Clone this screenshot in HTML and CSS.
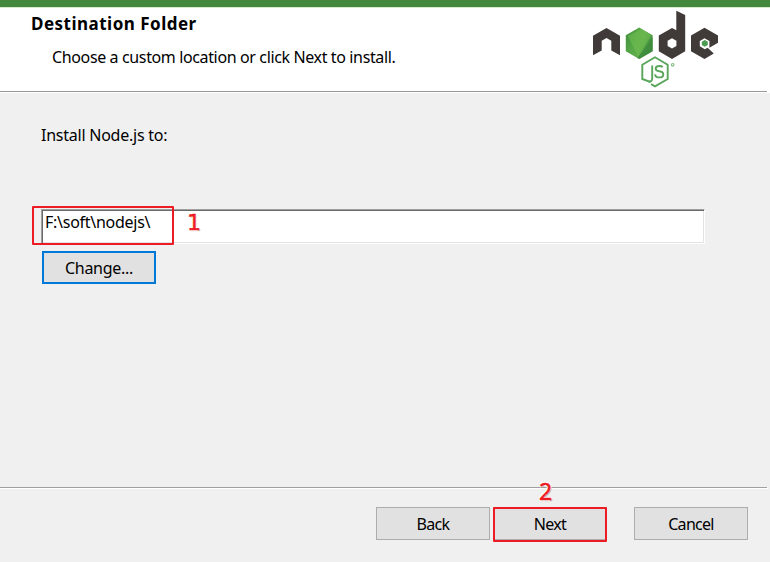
FILE: index.html
```html
<!DOCTYPE html>
<html lang="en">
<head>
<meta charset="utf-8">
<title>Node.js Setup</title>
<link rel="stylesheet" href="styles.css">
</head>
<body>
<div class="window">
  <header class="banner">
    <div class="heading">
      <h1 class="title">Destination Folder</h1>
      <p class="subtitle">Choose a custom location or click Next to install.</p>
    </div>
    <svg class="logo" width="130" height="80" viewBox="590 9 130 80" aria-label="node js">
      <defs>
        <linearGradient id="leaf" x1="0" y1="0" x2="1" y2=".5">
          <stop offset="0" stop-color="#3f8b3d"/>
          <stop offset=".4" stop-color="#55a647"/>
          <stop offset=".65" stop-color="#5fae4b"/>
          <stop offset="1" stop-color="#438f40"/>
        </linearGradient>
      </defs>
      <path fill="#403a39" d="M593 35.8 606.5 28 620 35.8V55.2L611.3 50.5V40.8L606.5 38 601.7 40.8V50.5L593 55.2Z"/>
      <path fill="url(#leaf)" d="M639.2 27.5 652.6 35.3V51.2L639.2 59 625.8 51.2V35.3Z"/>
      <path fill="#6fbd50" opacity=".6" d="M628 36 641 29 651 35 638.5 57.5Z"/>
      <path fill="#3f8b3d" opacity=".8" d="M652.6 37V51.2L639.2 59 637.5 58Z"/>
      <path fill="#403a39" fill-rule="evenodd" d="M676.3 10.8 685.2 15V51.2L672 59 658.8 51.2V35.5L672 28 676.3 30.3ZM672 38.2 667.6 40.8V45.9L672 48.5 676.4 45.9V40.8Z"/>
      <path fill="#403a39" d="M704.5 27.7 718 35.5V42.7L709.4 47.7V40.9L704.5 38.2 699.8 40.9V46.2L704.8 49.2 707.6 47.8 713.8 53.4 704.5 59 691 51.2V35.5Z"/>
      <path fill="#4b9c52" d="M704.8 40 707.8 41.8V45.1L704.8 46.8 701.8 45.1V41.8Z"/>
      <g fill="none" stroke="#59a65b" stroke-width="1.9">
        <path d="M650.7 82.2 642.3 79V64.7L655 57.3 667.7 64.7V79L655 86.3 651.1 84.2"/>
        <path d="M652.2 65.5V78.3Q652.2 82 648.4 81.4"/>
        <path d="M662.7 67.1Q661.5 65.9 659 66 655.7 66 655.7 68.7 655.7 70.7 659.3 71.2 663.3 71.6 663.3 74.4 663.3 77.4 659.3 77.4 655.5 77.4 655 74.3"/>
        <circle cx="672.7" cy="64.8" r="1.3" stroke-width="1.1" opacity=".75"/>
      </g>
    </svg>
  </header>
  <main class="content">
    <label class="prompt" for="path">Install Node.js to:</label>
    <div class="path-row">
      <div class="path" id="path">F:\soft\nodejs\</div>
      <span class="highlight path-highlight"></span>
      <span class="mark mark-one">1</span>
    </div>
    <button class="button change">Change...</button>
  </main>
  <footer class="actions">
    <span class="mark mark-two">2</span>
    <button class="button back">Back</button>
    <button class="button next">Next<span class="highlight next-highlight"></span></button>
    <button class="button cancel">Cancel</button>
  </footer>
</div>
</body>
</html>
```
FILE: styles.css
```css
* { box-sizing: border-box; }
body { margin: 0; }

.window {
  display: flex;
  flex-direction: column;
  width: 770px;
  height: 562px;
  background: #f0f0f0;
  color: #000;
  font: 16px/20px "Noto Sans", sans-serif;
  white-space: nowrap;
  overflow: hidden;
}

.banner {
  display: flex;
  justify-content: space-between;
  flex: none;
  height: 93px;
  padding: 1px 50px 0 31px;
  border-top: 7px solid #44883e;
  background: linear-gradient(#999, #999) 0 84px / 767px 1px no-repeat,
    linear-gradient(#d8ebce, #d8ebce) 0 0 / 100% 1px no-repeat, #fff;
}
.title {
  margin: 6px 0 0;
  font-size: 17px;
  line-height: 20px;
  letter-spacing: .49px;
}
.subtitle { margin: 13px 0 0 21px; letter-spacing: -.37px; }
.logo { display: block; margin-top: 1px; }

.content {
  flex: 1;
  padding: 32px 65px 0 41px;
}
.prompt { display: block; height: 20px; letter-spacing: -.24px; }
.path-row {
  position: relative;
  margin-top: 64px;
  height: 35px;
}
.path {
  height: 35px;
  padding: 2px 0 0 3px;
  border: 1px solid #fff;
  border-top-color: #a0a0a0;
  border-left-color: #a0a0a0;
  background: #fff;
  box-shadow: inset 1px 1px #696969, inset -1px -1px #e3e3e3;
  letter-spacing: -.27px;
}
.highlight {
  position: absolute;
  border: 2px solid #ed1c24;
  border-radius: 1px;
}
.path-highlight { left: -9px; top: -3px; width: 142px; height: 39px; }
.mark {
  position: absolute;
  color: #ed1c24;
  font-size: 23px;
  line-height: 24px;
  -webkit-text-stroke: .5px #ed1c24;
  text-shadow: -1px -1px #fff, 1px -1px #fff, -1px 1px #fff, 1px 1px 1px #aaa;
}
.mark-one { left: 146px; top: 2px; font-family: "DejaVu Sans", sans-serif; font-size: 22px; }
.mark-two { left: 539px; top: -8px; }

.button {
  position: relative;
  display: flex;
  align-items: center;
  justify-content: center;
  width: 114px;
  height: 33px;
  padding: 0;
  border: 1px solid #adadad;
  background: #e1e1e1;
  color: #000;
  font: inherit;
  letter-spacing: -.7px;
}
.change {
  margin: 7px 0 0 1px;
  border: 2px solid #0078d7;
  letter-spacing: -.3px;
}
.actions {
  position: relative;
  display: flex;
  flex: none;
  height: 75px;
  padding: 20px 22px 0 0;
  justify-content: flex-end;
  background: linear-gradient(#a0a0a0, #a0a0a0) 0 0 / 767px 1px no-repeat,
    linear-gradient(#fff, #fff) 0 1px / 768px 1px no-repeat;
}
.next { margin-left: 3px; }
.cancel { margin-left: 27px; }
.next-highlight { left: -1px; top: -1px; width: 114px; height: 35px; }
```
